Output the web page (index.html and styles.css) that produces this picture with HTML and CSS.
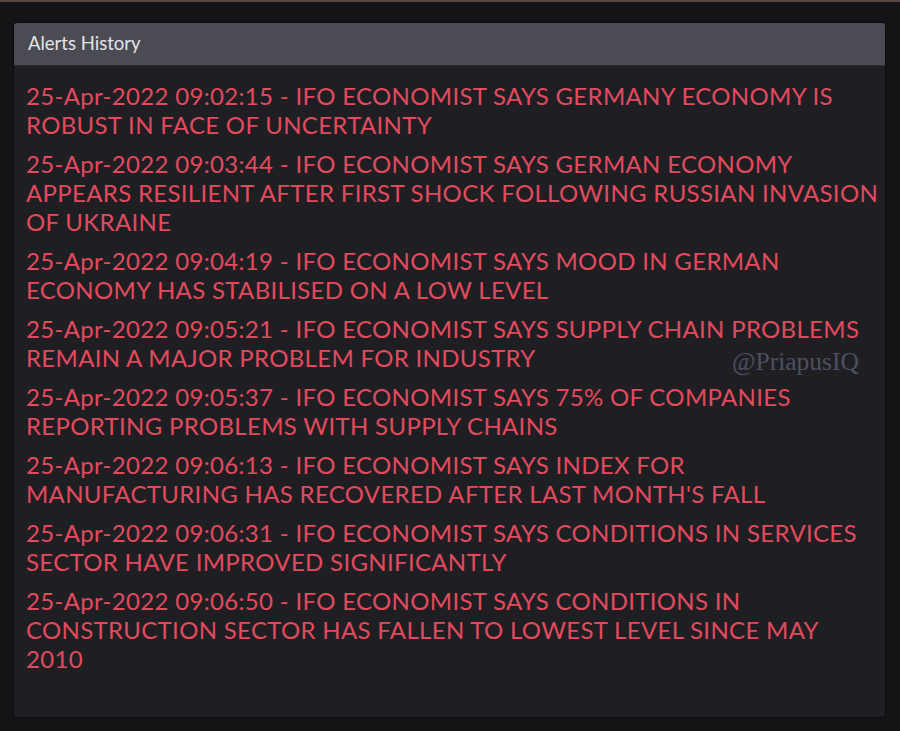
FILE: index.html
```html
<!DOCTYPE html>
<html>
<head>
<meta charset="utf-8">
<link rel="stylesheet" href="styles.css">
</head>
<body>
<div class="topline"></div>
<div class="panel">
  <div class="panel-header">Alerts History</div>
  <div class="panel-body">
    <div class="alert">25-Apr-2022 09:02:15 - IFO ECONOMIST SAYS GERMANY ECONOMY IS ROBUST IN FACE OF UNCERTAINTY</div>
    <div class="alert">25-Apr-2022 09:03:44 - IFO ECONOMIST SAYS GERMAN ECONOMY APPEARS RESILIENT AFTER FIRST SHOCK FOLLOWING RUSSIAN INVASION OF UKRAINE</div>
    <div class="alert">25-Apr-2022 09:04:19 - IFO ECONOMIST SAYS MOOD IN GERMAN ECONOMY HAS STABILISED ON A LOW LEVEL</div>
    <div class="alert">25-Apr-2022 09:05:21 - IFO ECONOMIST SAYS SUPPLY CHAIN PROBLEMS REMAIN A MAJOR PROBLEM FOR INDUSTRY</div>
    <div class="alert">25-Apr-2022 09:05:37 - IFO ECONOMIST SAYS 75% OF COMPANIES REPORTING PROBLEMS WITH SUPPLY CHAINS</div>
    <div class="alert">25-Apr-2022 09:06:13 - IFO ECONOMIST SAYS INDEX FOR MANUFACTURING HAS RECOVERED AFTER LAST MONTH'S FALL</div>
    <div class="alert">25-Apr-2022 09:06:31 - IFO ECONOMIST SAYS CONDITIONS IN SERVICES SECTOR HAVE IMPROVED SIGNIFICANTLY</div>
    <div class="alert">25-Apr-2022 09:06:50 - IFO ECONOMIST SAYS CONDITIONS IN CONSTRUCTION SECTOR HAS FALLEN TO LOWEST LEVEL SINCE MAY 2010</div>
    <div class="watermark">@PriapusIQ</div>
  </div>
</div>
</body>
</html>
```
FILE: styles.css
```css
html, body {
  margin: 0;
  padding: 0;
  background: #141416;
  width: 900px;
  height: 731px;
  overflow: hidden;
}
.topline {
  height: 2px;
  background: #5a4440;
}
.panel {
  margin: 20px 14px 0 13px;
  height: 696px;
  background: #1f1f23;
  border: 1px solid #0c0c0e;
  border-radius: 3px;
  display: flex;
  flex-direction: column;
  box-sizing: border-box;
}
.panel-header {
  height: 43px;
  flex: none;
  background: #4b4b53;
  border-bottom: 1px solid #2c2c30;
  border-radius: 3px 3px 0 0;
  box-sizing: border-box;
  padding: 9px 0 0 14px;
  color: #e4e4e8;
  font-family: Lato, "Noto Sans", sans-serif;
  font-size: 18.5px;
}
.panel-body {
  position: relative;
  padding: 15px 5px 0 12px;
  display: flex;
  flex-direction: column;
  gap: 10px;
}
.alert {
  color: #e24a5e;
  font-family: Lato, "Noto Sans", sans-serif;
  font-size: 24px;
  line-height: 29px;
  letter-spacing: 0.32px;
}
.watermark {
  position: absolute;
  left: 718px;
  top: 281px;
  font-family: "Liberation Serif", "DejaVu Serif", serif;
  font-size: 25.5px;
  color: #4c5060;
}
```
